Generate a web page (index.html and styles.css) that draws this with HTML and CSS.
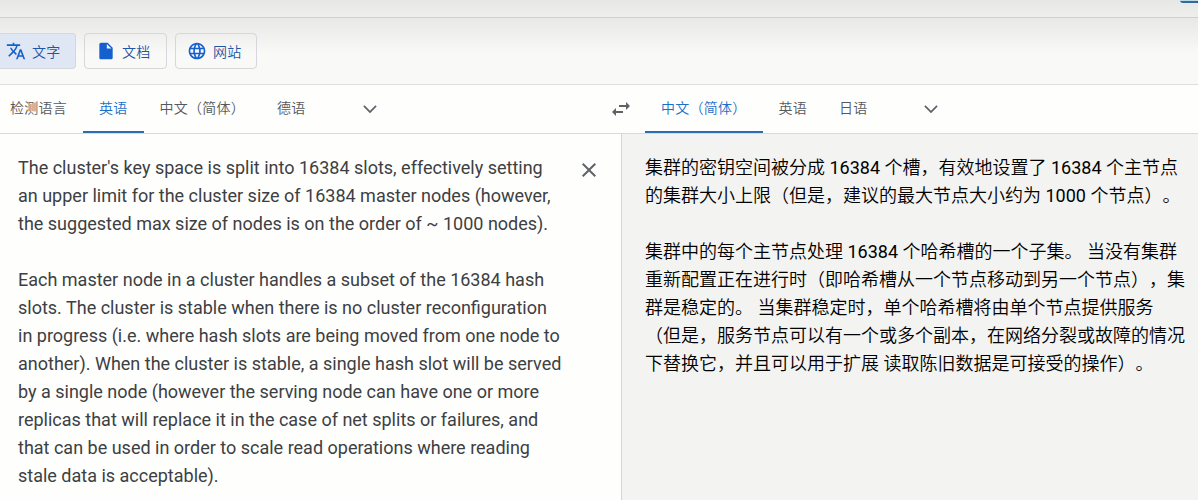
FILE: index.html
```html
<!DOCTYPE html>
<html lang="zh-CN">
<head>
<meta charset="utf-8">
<title>翻译</title>
<link rel="stylesheet" href="styles.css">
</head>
<body>
<header class="topbar"><span class="topbar-button"></span></header>
<nav class="modes">
  <button class="mode mode-active">
    <svg class="mode-icon" viewBox="0 0 24 24"><path d="M12.87 15.07l-2.54-2.51.03-.03A17.52 17.52 0 0 0 14.07 6H17V4h-7V2H8v2H1v1.99h11.17C11.5 7.92 10.44 9.75 9 11.35 8.07 10.32 7.3 9.19 6.69 8h-2c.73 1.63 1.73 3.17 2.98 4.56l-5.09 5.02L4 19l5-5 3.11 3.11.76-2.04zM18.5 10h-2L12 22h2l1.12-3h4.75L21 22h2l-4.5-12zm-2.62 7l1.62-4.33L19.12 17h-3.24z"/></svg>
    <span>文字</span>
  </button>
  <button class="mode mode-doc">
    <svg class="mode-icon" viewBox="0 0 24 24"><path d="M6 2c-1.100 0-1.990.9-1.990 2L4 20c0 1.100.89 2 1.990 2H18c1.100 0 2-.9 2-2V8l-6-6H6zm7 7V3.500L18.500 9H13z"/></svg>
    <span>文档</span>
  </button>
  <button class="mode mode-site">
    <svg class="mode-icon" viewBox="0 0 24 24"><path d="M11.99 2C6.47 2 2 6.48 2 12s4.470 10 9.990 10C17.520 22 22 17.520 22 12S17.520 2 11.990 2zm6.930 6h-2.950c-.32-1.250-.78-2.450-1.380-3.560 1.840.63 3.370 1.910 4.330 3.560zM12 4.040c.83 1.200 1.480 2.530 1.910 3.960h-3.820c.43-1.430 1.080-2.760 1.910-3.960zM4.260 14C4.100 13.360 4 12.690 4 12s.1-1.360.26-2h3.380c-.08.66-.14 1.320-.14 2s.06 1.340.14 2H4.260zm.82 2h2.950c.32 1.250.78 2.450 1.380 3.560-1.840-.63-3.370-1.900-4.330-3.560zm2.950-8H5.080c.96-1.660 2.490-2.930 4.330-3.560C8.810 5.550 8.350 6.750 8.030 8zM12 19.960c-.83-1.200-1.480-2.530-1.910-3.960h3.820c-.43 1.430-1.080 2.760-1.910 3.960zM14.340 14H9.660c-.09-.66-.16-1.320-.16-2s.07-1.350.16-2h4.680c.09.65.16 1.320.16 2s-.07 1.340-.16 2zm.25 5.560c.6-1.110 1.060-2.310 1.380-3.560h2.950c-.96 1.650-2.490 2.930-4.330 3.560zM16.360 14c.08-.66.14-1.320.14-2s-.06-1.340-.14-2h3.380c.16.64.26 1.310.26 2s-.1 1.360-.26 2h-3.380z"/></svg>
    <span>网站</span>
  </button>
</nav>
<main class="card">
  <div class="languages">
    <div class="source-langs">
      <span class="lang lang-detect">检测语言</span>
      <span class="lang lang-active">英语</span>
      <span class="lang">中文（简体）</span>
      <span class="lang">德语</span>
      <svg class="icon chevron-source" viewBox="0 0 24 24"><path d="M5.410 7.590L4 9l8 8 8-8-1.410-1.410L12 14.170z"/></svg>
    </div>
    <svg class="icon swap" viewBox="0 0 24 24"><path d="M6.990 11L3 15l3.990 4v-3H14v-2H6.990v-3zM21 9l-3.990-4v3H10v2h7.010v3L21 9z"/></svg>
    <div class="target-langs">
      <span class="lang lang-active">中文（简体）</span>
      <span class="lang">英语</span>
      <span class="lang">日语</span>
      <svg class="icon chevron-target" viewBox="0 0 24 24"><path d="M5.410 7.590L4 9l8 8 8-8-1.410-1.410L12 14.170z"/></svg>
    </div>
  </div>
  <div class="panes">
    <section class="source">
      <div class="source-text">
        <p>The cluster's key space is split into 16384 slots, effectively setting<br>an upper limit for the cluster size of 16384 master nodes (however,<br>the suggested max size of nodes is on the order of ~ 1000 nodes).</p>
        <p>Each master node in a cluster handles a subset of the 16384 hash<br>slots. The cluster is stable when there is no cluster reconfiguration<br>in progress (i.e. where hash slots are being moved from one node to<br>another). When the cluster is stable, a single hash slot will be served<br>by a single node (however the serving node can have one or more<br>replicas that will replace it in the case of net splits or failures, and<br>that can be used in order to scale read operations where reading<br>stale data is acceptable).</p>
      </div>
      <svg class="icon clear" viewBox="0 0 24 24"><path d="M19 6.410L17.590 5 12 10.590 6.410 5 5 6.410 10.590 12 5 17.590 6.410 19 12 13.410 17.590 19 19 17.590 13.410 12z"/></svg>
    </section>
    <section class="target">
      <p>集群的密钥空间被分成<span class="num"> 16384 </span>个槽，有效地设置了<span class="num"> 16384 </span>个主节点<br>的集群大小上限（但是，建议的最大节点大小约为<span class="num"> 1000 </span>个节点）。</p>
      <p>集群中的每个主节点处理<span class="num"> 16384 </span>个哈希槽的一个子集。 当没有集群<br>重新配置正在进行时（即哈希槽从一个节点移动到另一个节点），集<br>群是稳定的。 当集群稳定时，单个哈希槽将由单个节点提供服务<br>（但是，服务节点可以有一个或多个副本，在网络分裂或故障的情况<br>下替换它，并且可以用于扩展 读取陈旧数据是可接受的操作）。</p>
    </section>
  </div>
</main>
</body>
</html>
```
FILE: styles.css
```css
* { box-sizing: border-box; }
body {
  margin: 0;
  height: 500px;
  overflow: hidden;
  display: flex;
  flex-direction: column;
  background: #f9f9f8;
  font-family: Roboto, "Noto Sans CJK SC", sans-serif;
  text-spacing-trim: space-all;
}
.topbar {
  flex: none;
  height: 18px;
  display: flex;
  justify-content: flex-end;
  background: linear-gradient(#e7e7e6, #eeeeed);
  border-bottom: 1px solid #d0d0cf;
}
.topbar-button {
  width: 18px;
  height: 3px;
  background: #34699c;
  border-top: 1px solid #b9dbe7;
  border-bottom-left-radius: 3px;
}
.modes {
  flex: none;
  height: 66px;
  padding-top: 15px;
  display: flex;
  gap: 8px;
  background: linear-gradient(#e8e8e7, #f9f9f8 36px);
}
.mode {
  height: 36px;
  padding: 0 0 0 11px;
  display: flex;
  align-items: center;
  gap: 6px;
  border: 1px solid #d6d7da;
  border-radius: 4px;
  background: transparent;
  color: #1f57a8;
  font-family: inherit;
  font-size: 14px;
  font-weight: 350;
  letter-spacing: .25px;
}
.mode-active {
  width: 76px;
  padding-left: 6px;
  border-left: 0;
  border-radius: 0 4px 4px 0;
  background: #dfe7f5;
}
.mode-doc { width: 83px; }
.mode-site { width: 82px; }
.mode-icon { flex: none; width: 20px; height: 20px; fill: #1560cf; }
.card {
  flex: 1;
  display: flex;
  flex-direction: column;
  background: #fefefd;
  border-top: 1px solid #dededd;
}
.languages {
  flex: none;
  height: 49px;
  display: flex;
  border-bottom: 1px solid #dadad9;
}
.source-langs { width: 609px; display: flex; align-items: stretch; }
.target-langs { display: flex; margin-left: 12px; }
.lang {
  height: 48px;
  padding: 0 16px;
  line-height: 46px;
  font-size: 14px;
  font-weight: 350;
  letter-spacing: .25px;
  white-space: nowrap;
  color: #55595e;
  border-bottom: 2px solid transparent;
}
.lang-detect { padding-left: 10px; }
.lang-active { color: #1a6fc9; border-bottom-color: #2c6cb2; }
.icon { flex: none; fill: #5f6368; }
.chevron-source { width: 20px; height: 20px; margin: 14px 0 0 38px; }
.chevron-target { width: 20px; height: 20px; margin: 14px 0 0 37px; }
.swap { width: 24px; height: 24px; margin-top: 12px; }
.panes { flex: 1; display: flex; }
.source {
  width: 622px;
  padding: 20px 20px 0 18px;
  display: flex;
  justify-content: space-between;
  border-right: 1px solid #d5d5d4;
}
.source-text { color: #3c4043; }
.clear { width: 24px; height: 24px; margin-top: 4px; }
.target { flex: 1; padding: 20px 0 0 23px; background: #f3f3f2; color: #000; font-weight: 350; }
.num { font-weight: 400; }
p {
  margin: 0 0 28px;
  font-size: 18px;
  line-height: 28px;
  white-space: nowrap;
}
```
